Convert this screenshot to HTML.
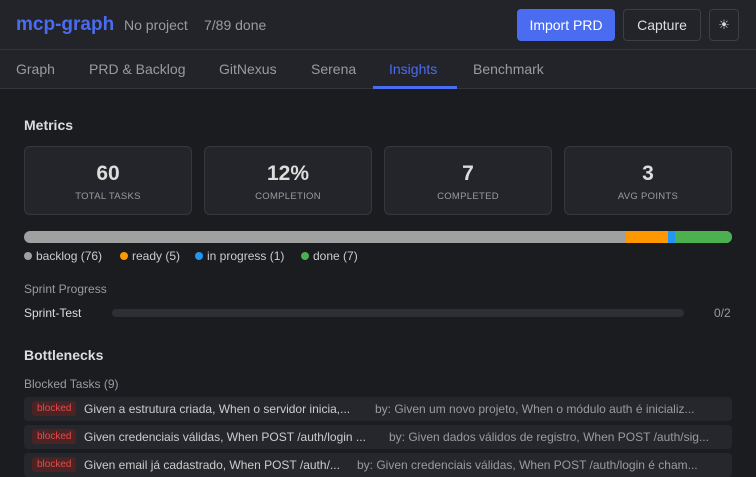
<!DOCTYPE html><html><head><style>
*{box-sizing:border-box;margin:0;padding:0}
body{width:756px;height:469px;overflow:hidden;background:#1b1c20;font-family:"Liberation Sans",sans-serif;color:#ddd}
.hdr{height:50px;background:#232429;border-bottom:1px solid #35363b;position:relative}
.logo{position:absolute;left:16px;top:14px;font-size:19px;font-weight:bold;color:#4a6cf0}
.sub{position:absolute;top:17px;font-size:14px;color:#9a9ba0}
.btn{position:absolute;top:9px;height:32px;border-radius:4px;font-size:14px;display:flex;align-items:center;justify-content:center}
.tabs{height:39px;background:#232429;border-bottom:1px solid #35363b;position:relative}
.tab{position:absolute;top:11px;font-size:14px;color:#9a9ba0}
.h{position:absolute;left:24px;font-size:14px;font-weight:bold;color:#ddd}
.card{position:absolute;top:146px;width:168px;height:69px;background:#24252a;border:1px solid #37383d;border-radius:6px;text-align:center}
.card b{display:block;margin-top:15px;font-size:21px;color:#ddd}
.card span{display:block;margin-top:5px;font-size:9.5px;color:#9a9ba0;letter-spacing:.3px}
.bar{position:absolute;left:24px;top:231px;width:708px;height:12px;border-radius:6px;overflow:hidden;background:#a0a0a0}
.leg{position:absolute;top:249px;font-size:12px;color:#ccc}
.dot{display:inline-block;width:8px;height:8px;border-radius:50%;margin-right:4px}
.row{position:absolute;left:24px;width:708px;height:24px;background:#26272c;border-radius:4px;font-size:12px;white-space:nowrap;overflow:hidden}
.bl{position:absolute;left:8px;top:4px;background:#4a2424;color:#e84a4a;font-size:10px;padding:2px 5px;border-radius:3px}
.t1{position:absolute;left:60px;top:5px;color:#ccc}
.t2{position:absolute;left:365px;top:5px;color:#9a9ba0}
</style></head><body>
<div class="hdr">
<div class="logo">mcp-graph</div>
<div class="sub" style="left:124px">No project</div>
<div class="sub" style="left:204px">7/89 done</div>
<div class="btn" style="left:517px;width:98px;background:#4a6cf0;color:#fff">Import PRD</div>
<div class="btn" style="left:623px;width:78px;border:1px solid #3d3e43;color:#ddd">Capture</div>
<div class="btn" style="left:709px;width:30px;border:1px solid #3d3e43;color:#ddd;font-size:13px">☀</div>
</div>
<div class="tabs">
<div class="tab" style="left:16px">Graph</div>
<div class="tab" style="left:89px">PRD &amp; Backlog</div>
<div class="tab" style="left:219px">GitNexus</div>
<div class="tab" style="left:311px">Serena</div>
<div class="tab" style="left:389px;color:#4a6cf0">Insights</div>
<div class="tab" style="left:473px">Benchmark</div>
<div style="position:absolute;left:373px;top:36px;width:84px;height:3px;background:#4a6cf0"></div>
</div>
<div class="h" style="top:117px">Metrics</div>
<div class="card" style="left:24px"><b>60</b><span>TOTAL TASKS</span></div>
<div class="card" style="left:204px"><b>12%</b><span>COMPLETION</span></div>
<div class="card" style="left:384px"><b>7</b><span>COMPLETED</span></div>
<div class="card" style="left:564px"><b>3</b><span>AVG POINTS</span></div>
<div class="bar"><div style="position:absolute;left:602px;width:42px;height:12px;background:#ff9800"></div><div style="position:absolute;left:644px;width:7px;height:12px;background:#2196f3"></div><div style="position:absolute;left:651px;width:57px;height:12px;background:#4caf50"></div></div>
<div class="leg" style="left:24px"><span class="dot" style="background:#a0a0a0"></span>backlog (76)</div>
<div class="leg" style="left:120px"><span class="dot" style="background:#ff9800"></span>ready (5)</div>
<div class="leg" style="left:195px"><span class="dot" style="background:#2196f3"></span>in progress (1)</div>
<div class="leg" style="left:301px"><span class="dot" style="background:#4caf50"></span>done (7)</div>
<div style="position:absolute;left:24px;top:282px;font-size:12px;color:#9a9ba0">Sprint Progress</div>
<div style="position:absolute;left:24px;top:306px;font-size:12px;color:#ddd">Sprint-Test</div>
<div style="position:absolute;left:112px;top:309px;width:572px;height:8px;border-radius:4px;background:#2e2f34"></div>
<div style="position:absolute;left:714px;top:306px;font-size:12px;color:#9a9ba0">0/2</div>
<div class="h" style="top:347px">Bottlenecks</div>
<div style="position:absolute;left:24px;top:377px;font-size:12px;color:#9a9ba0">Blocked Tasks (9)</div>
<div class="row" style="top:397px"><span class="bl">blocked</span><span class="t1">Given a estrutura criada, When o servidor inicia,...</span><span class="t2" style="left:351px">by: Given um novo projeto, When o módulo auth é inicializ...</span></div>
<div class="row" style="top:425px"><span class="bl">blocked</span><span class="t1">Given credenciais válidas, When POST /auth/login ...</span><span class="t2">by: Given dados válidos de registro, When POST /auth/sig...</span></div>
<div class="row" style="top:453px"><span class="bl">blocked</span><span class="t1">Given email já cadastrado, When POST /auth/...</span><span class="t2" style="left:333px">by: Given credenciais válidas, When POST /auth/login é cham...</span></div>
</body></html>
